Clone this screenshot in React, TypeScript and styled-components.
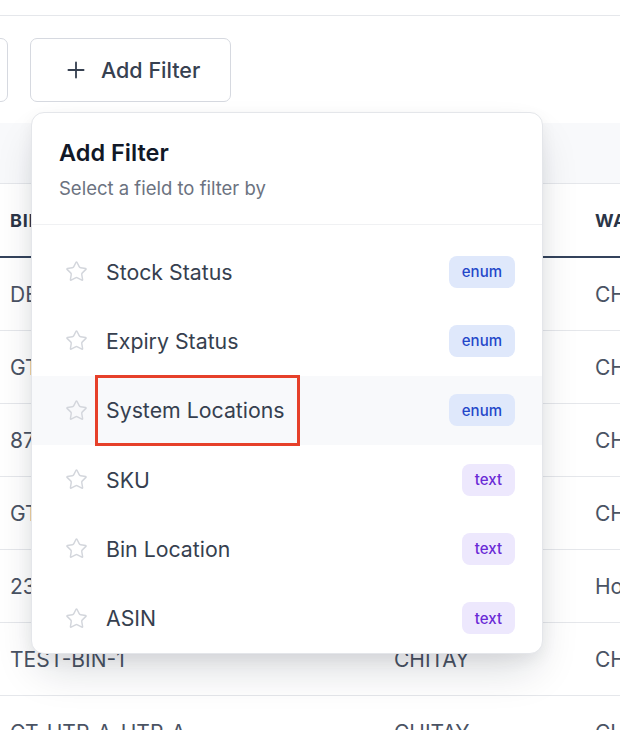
import React, { FC } from 'react';
import styled, { createGlobalStyle } from 'styled-components';
import { Plus, Star } from 'lucide-react';

const GlobalStyle = createGlobalStyle`
  html, body {
    margin: 0;
    padding: 0;
    background: #ffffff;
    font-family: Inter, "Noto Sans", "Liberation Sans", sans-serif;
    -webkit-font-smoothing: antialiased;
  }
`;

const Page = styled.div`
  position: relative;
  width: 620px;
  height: 730px;
  overflow: hidden;
  background: #ffffff;
`;

const TopBar = styled.div`
  height: 15px;
  border-bottom: 1px solid #e5e7eb;
`;

const Toolbar = styled.div`
  display: flex;
  align-items: center;
  gap: 22px;
  padding: 22px 0 21px;
`;

const ToolButton = styled.button<{ $ghost?: boolean }>`
  display: flex;
  align-items: center;
  gap: 12px;
  height: 64px;
  padding: 0 30px 0 32px;
  margin-left: ${p => (p.$ghost ? '-92px' : '0')};
  width: ${p => (p.$ghost ? '100px' : 'auto')};
  background: #ffffff;
  border: 1px solid #d6d9e0;
  border-radius: 7px;
  font-family: inherit;
  font-size: 21.5px;
  font-weight: 500;
  color: #374151;
`;

const FilterBand = styled.div`
  height: 60px;
  background: #f8f9fb;
  border-bottom: 1px solid #e5e7eb;
`;

const Row = styled.div<{ $head?: boolean }>`
  display: grid;
  grid-template-columns: 384px 201px 1fr;
  height: 72px;
  border-bottom: ${p => (p.$head ? '2px solid #34435c' : '1px solid #e5e7eb')};
`;

const Cell = styled.div<{ $head?: boolean }>`
  display: flex;
  align-items: center;
  padding-left: 10px;
  white-space: nowrap;
  overflow: hidden;
  font-size: ${p => (p.$head ? '18px' : '21px')};
  font-weight: ${p => (p.$head ? 700 : 400)};
  letter-spacing: ${p => (p.$head ? '0.04em' : '0')};
  color: ${p => (p.$head ? '#2b3547' : '#4a5363')};
`;

const Popover = styled.div`
  position: absolute;
  top: 112px;
  left: 31px;
  width: 510px;
  background: #ffffff;
  border: 1px solid #e4e6ea;
  border-radius: 13px;
  box-shadow: 0 22px 44px -8px rgba(15, 23, 42, 0.16), 0 6px 16px rgba(15, 23, 42, 0.06);
  overflow: hidden;
`;

const PopHeader = styled.div`
  padding: 26px 27px 24px;
  border-bottom: 1px solid #f0f1f3;
`;

const PopTitle = styled.div`
  font-size: 23.5px;
  line-height: 28px;
  font-weight: 600;
  color: #111827;
  margin-bottom: 9px;
`;

const PopSubtitle = styled.div`
  font-size: 18.5px;
  line-height: 24px;
  color: #6b7280;
`;

const FieldList = styled.div`
  padding-top: 12px;
`;

const FieldItem = styled.div<{ $active?: boolean }>`
  position: relative;
  display: flex;
  align-items: center;
  height: 69.3px;
  padding: 0 27px 0 33px;
  background: ${p => (p.$active ? '#f8f9fb' : 'transparent')};
`;

const FieldName = styled.span`
  flex: 1;
  margin-left: 18px;
  font-size: 21.3px;
  color: #363f4f;
`;

const TypeBadge = styled.span<{ $kind: 'enum' | 'text' }>`
  display: inline-flex;
  align-items: center;
  height: 32px;
  padding: 0 13px;
  border-radius: 8px;
  font-size: 15px;
  font-weight: 500;
  background: ${p => (p.$kind === 'enum' ? '#dfe8fb' : '#ede8fd')};
  color: ${p => (p.$kind === 'enum' ? '#2447c9' : '#6a2bd6')};
`;

const Marker = styled.span`
  position: absolute;
  left: 63px;
  top: -1px;
  width: 205px;
  height: 71px;
  box-sizing: border-box;
  border: 3px solid #e6402a;
  pointer-events: none;
`;

const rows = [
  ['DE-A-01-01', 'CHITAY', 'CHITAY'],
  ['GT-B-02-04', 'CHITAY', 'CHITAY'],
  ['87-C-11-02', 'CHITAY', 'CHITAY'],
  ['GT-D-03-01', 'CHITAY', 'CHITAY'],
  ['23-E-07-05', 'HOUSTON', 'Houston'],
  ['TEST-BIN-1', 'CHITAY', 'CHITAY'],
  ['GT-UTP-A-UTP-A', 'CHITAY', 'CHITAY'],
];

const fields: { name: string; kind: 'enum' | 'text' }[] = [
  { name: 'Stock Status', kind: 'enum' },
  { name: 'Expiry Status', kind: 'enum' },
  { name: 'System Locations', kind: 'enum' },
  { name: 'SKU', kind: 'text' },
  { name: 'Bin Location', kind: 'text' },
  { name: 'ASIN', kind: 'text' },
];

const App: FC = () => (
  <Page>
    <GlobalStyle />
    <TopBar />
    <Toolbar>
      <ToolButton $ghost type="button" />
      <ToolButton type="button">
        <Plus size={26} strokeWidth={1.7} />
        Add Filter
      </ToolButton>
    </Toolbar>
    <FilterBand />
    <Row $head>
      <Cell $head>BIN</Cell>
      <Cell $head>WAREHOUSE</Cell>
      <Cell $head>WAREHOUSE NAME</Cell>
    </Row>
    {rows.map(r => (
      <Row key={r[0]}>
        {r.map((v, i) => (
          <Cell key={i}>{v}</Cell>
        ))}
      </Row>
    ))}

    <Popover>
      <PopHeader>
        <PopTitle>Add Filter</PopTitle>
        <PopSubtitle>Select a field to filter by</PopSubtitle>
      </PopHeader>
      <FieldList>
        {fields.map(f => (
          <FieldItem key={f.name} $active={f.name === 'System Locations'}>
            <Star size={23} strokeWidth={1.5} color="#d3d6dc" />
            <FieldName>{f.name}</FieldName>
            <TypeBadge $kind={f.kind}>{f.kind}</TypeBadge>
            {f.name === 'System Locations' && <Marker />}
          </FieldItem>
        ))}
      </FieldList>
    </Popover>
  </Page>
);

export default App;
